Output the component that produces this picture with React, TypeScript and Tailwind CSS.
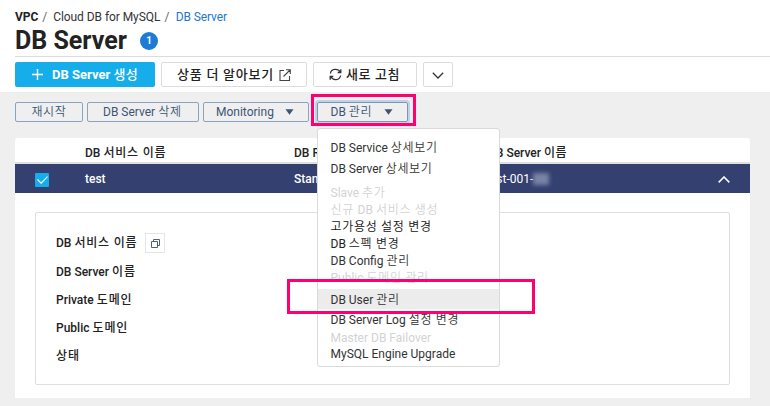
import React from "react";

function Caret() {
  return (
    <svg className="h-[6px] w-[9px] shrink-0" viewBox="0 0 9 6" fill="#3d5573">
      <path d="M0.5 0.3h8L4.5 5.8z" />
    </svg>
  );
}

// Sets Hangul runs a little wider and lighter than the Latin words beside them.
function Mixed({ text, ko = "font-[350] tracking-[0.7px]" }: { text: string; ko?: string }) {
  return (
    <span className="whitespace-pre">
      {text.split(/([가-힣][가-힣 ]*)/).map((part, i) =>
        i % 2 ? (
          <span key={i} className={ko}>{part}</span>
        ) : (
          part
        ),
      )}
    </span>
  );
}

const menuItems = [
  { label: "DB Service 상세보기", style: "h-[21px] text-[#333]" },
  { label: "DB Server 상세보기", style: "h-[21px] text-[#333]" },
  { label: "Slave 추가", style: "mt-[5px] h-[17px] text-[#d3d3d3]" },
  { label: "신규 DB 서비스 생성", style: "h-[17px] text-[#d3d3d3]" },
  { label: "고가용성 설정 변경", style: "h-[17px] text-[#111]" },
  { label: "DB 스펙 변경", style: "h-[17px] text-[#222]" },
  { label: "DB Config 관리", style: "h-[17px] text-[#333]" },
  { label: "Public 도메인 관리", style: "h-[17px] text-[#d3d3d3]" },
  { label: "DB User 관리", style: "mt-[3px] h-[20px] bg-[#ececec] pt-[2px] text-[#333]" },
  { label: "DB Server Log 설정 변경", style: "h-[20px] pt-[2px] text-[#333]" },
  { label: "Master DB Failover", style: "h-[16px] pt-[2px] text-[#d3d3d3]" },
  { label: "MySQL Engine Upgrade", style: "h-[17px] text-[#333]" },
];

const details = ["DB Server 이름", "Private 도메인", "Public 도메인", "상태"];

function DbMenu() {
  return (
    <div className="absolute top-[26px] left-0 z-10 flex h-[239px] w-[183px] flex-col rounded-[3px] border border-[#dadada] bg-white pt-[8px] text-[12px]">
      {menuItems.map((item) => (
        <div key={item.label} className={`flex shrink-0 items-center pl-[12.5px] whitespace-nowrap ${item.style}`}>
          <Mixed text={item.label} />
        </div>
      ))}
    </div>
  );
}

export default function App() {
  return (
    <div className="relative flex h-[406px] w-[770px] flex-col overflow-hidden bg-white font-['Roboto','Noto_Sans_CJK_KR',sans-serif] text-[#222]">
      <header className="flex h-[92px] shrink-0 flex-col pl-[15px]">
        <nav className="mt-[8px] flex h-[17px] items-center text-[12px] tracking-[-0.06px] whitespace-pre">
          <b className="font-bold">VPC</b>
          <span className="ml-[4px] text-[#666]">/</span>
          <span className="ml-[6px] text-[#333]">Cloud DB for MySQL</span>
          <span className="ml-[4px] text-[#666]">/</span>
          <span className="ml-[6.5px] tracking-[-0.12px] text-[#2277cf]">DB Server</span>
        </nav>
        <div className="flex h-[32px] items-center border-b border-[#dcdcdc]">
          <h1 className="w-[112px] text-[25px] leading-[30px] font-bold whitespace-nowrap">DB Server</h1>
          <span className="ml-[13px] flex size-[18px] items-center justify-center rounded-full bg-[#1c7cd5] text-[10px] leading-none font-bold text-white">1</span>
        </div>
        <div className="mt-[5px] flex h-[25px] text-[13px] whitespace-nowrap">
          <button className="flex w-[140px] items-center rounded-[2px] bg-[#16aeea] pl-[17px] font-bold text-white">
            <svg className="mr-[9px] size-[11px]" viewBox="0 0 11 11" stroke="white" strokeWidth="1.4">
              <path d="M5.5 0v11M0 5.5h11" />
            </svg>
            <Mixed text="DB Server 생성" ko="font-medium tracking-[0.5px]" />
          </button>
          <button className="ml-[6px] flex w-[146px] items-center rounded-[2px] border border-[#dcdcdc] pl-[15px]">
            <Mixed text="상품 더 알아보기" ko="font-medium tracking-[0.75px]" />
            <svg className="ml-[5px] size-[12px]" viewBox="0 0 12 12" fill="none" stroke="#444" strokeWidth="1.1">
              <path d="M5 1.5H1v10h9.5V7M7 .7h4.3V5M11 1L4.5 7.5" />
            </svg>
          </button>
          <button className="ml-[6px] flex w-[104px] items-center rounded-[2px] border border-[#dcdcdc] pl-[15px]">
            <svg className="mr-[4px] size-[13px]" viewBox="0 0 13 13" fill="none" stroke="#333" strokeWidth="1.3">
              <path d="M1.4 5.5C2.2 .5 9 .1 11.3 4.2M11.6 7.5C10.8 12.5 4 12.9 1.7 8.8M11.8 1.3v3.2H8.7M1.2 11.7V8.5h3.1" />
            </svg>
            <Mixed text="새로 고침" ko="font-medium tracking-[0.6px]" />
          </button>
          <button className="ml-[6px] flex w-[30px] items-center justify-center rounded-[2px] border border-[#dcdcdc]">
            <svg className="mt-[2px] h-[7px] w-[12px]" viewBox="0 0 12 7" fill="none" stroke="#333" strokeWidth="1.3">
              <path d="M.8 .8L6 6l5.2-5.2" />
            </svg>
          </button>
        </div>
      </header>

      <main className="flex h-[314px] flex-col bg-[#efefef] pt-[10px] pl-[15px]">
        <div className="flex h-[20px] gap-[4px] text-[12px] whitespace-nowrap text-[#3d5573]">
          <button className="flex w-[68px] items-center justify-center rounded-[2px] border border-[#8ba3c0]">
            <Mixed text="재시작" />
          </button>
          <button className="flex w-[112px] items-center rounded-[2px] border border-[#8ba3c0] pl-[15px]">
            <Mixed text="DB Server 삭제" />
          </button>
          <button className="flex w-[106px] items-center justify-between rounded-[2px] border border-[#8ba3c0] pr-[14px] pl-[12px]">
            Monitoring
            <Caret />
          </button>
          <div className="relative ml-[4px]">
            <button className="flex h-[20px] w-[91px] items-center justify-between rounded-[2px] border border-[#7997b8] pr-[14px] pl-[12.5px] shadow-[0_0_0_2px_#bfd2e8]">
              <Mixed text="DB 관리" />
              <Caret />
            </button>
            <DbMenu />
          </div>
        </div>

        <section className="mt-[16px] flex h-[260px] w-[735px] flex-col rounded-t-[3px] bg-white">
          <div className="flex h-[26px] shrink-0 items-center border-b-2 border-[#dfdfdf] pt-[5px] text-[12px] font-medium whitespace-nowrap">
            <span className="w-[209px] pl-[70px]"><Mixed text="DB 서비스 이름" ko="font-medium tracking-[0.8px]" /></span>
            <span className="w-[194px] pl-[70px]">DB R</span>
            <span className="pl-[70px]"><Mixed text="DB Server 이름" ko="font-medium tracking-[0.6px]" /></span>
          </div>
          <div className="flex h-[29px] shrink-0 items-center bg-[#344170] text-[12px] font-medium whitespace-nowrap text-white">
            <span className="mt-[3px] ml-[20px] flex size-[14px] items-center justify-center rounded-[1px] bg-[#16aeea]">
              <svg className="h-[8px] w-[11px]" viewBox="0 0 11 8" fill="none" stroke="white" strokeWidth="1.1">
                <path d="M.5 3.5l3.6 3.7L10.5.6" />
              </svg>
            </span>
            <span className="ml-[36px] w-[209px]">test</span>
            <span className="w-[192px]">Stan</span>
            <span className="font-normal">test-001-</span>
            <span className="h-[12px] w-[16px] bg-[#7a83a6] blur-[2px]" />
            <svg className="mt-[2px] mr-[20px] ml-auto h-[7px] w-[12px]" viewBox="0 0 12 7" fill="none" stroke="white" strokeWidth="1.5">
              <path d="M.7 6.4L6 1l5.3 5.4" />
            </svg>
          </div>
          <div className="mt-[19px] ml-[20px] flex h-[173px] w-[695px] flex-col rounded-[2px] border border-[#dedede] pt-[14px] pl-[20px] text-[12px] font-medium whitespace-nowrap">
            <div className="flex h-[31px] items-center">
              <Mixed text="DB 서비스 이름" ko="font-medium tracking-[0.8px]" />
              <span className="mt-[1px] ml-[8px] flex size-[20px] items-center justify-center border border-[#e6e6e6]">
                <svg className="size-[9px]" viewBox="0 0 9 9" fill="none" stroke="#526273" strokeWidth="1">
                  <path d="M.5 2.5h6v6h-6zM2.5 2.5v-2h6v6h-2" />
                </svg>
              </span>
            </div>
            {details.map((label) => (
              <div key={label} className="flex h-[28px] items-center">
                <Mixed text={label} ko="font-medium tracking-[0.9px]" />
              </div>
            ))}
          </div>
        </section>
      </main>

      <div className="pointer-events-none absolute top-[94px] left-[311px] z-20 h-[32px] w-[105px] border-3 border-[#ff0070]" />
      <div className="pointer-events-none absolute top-[279px] left-[287px] z-20 h-[35px] w-[248px] border-3 border-[#ff0070]" />
    </div>
  );
}
